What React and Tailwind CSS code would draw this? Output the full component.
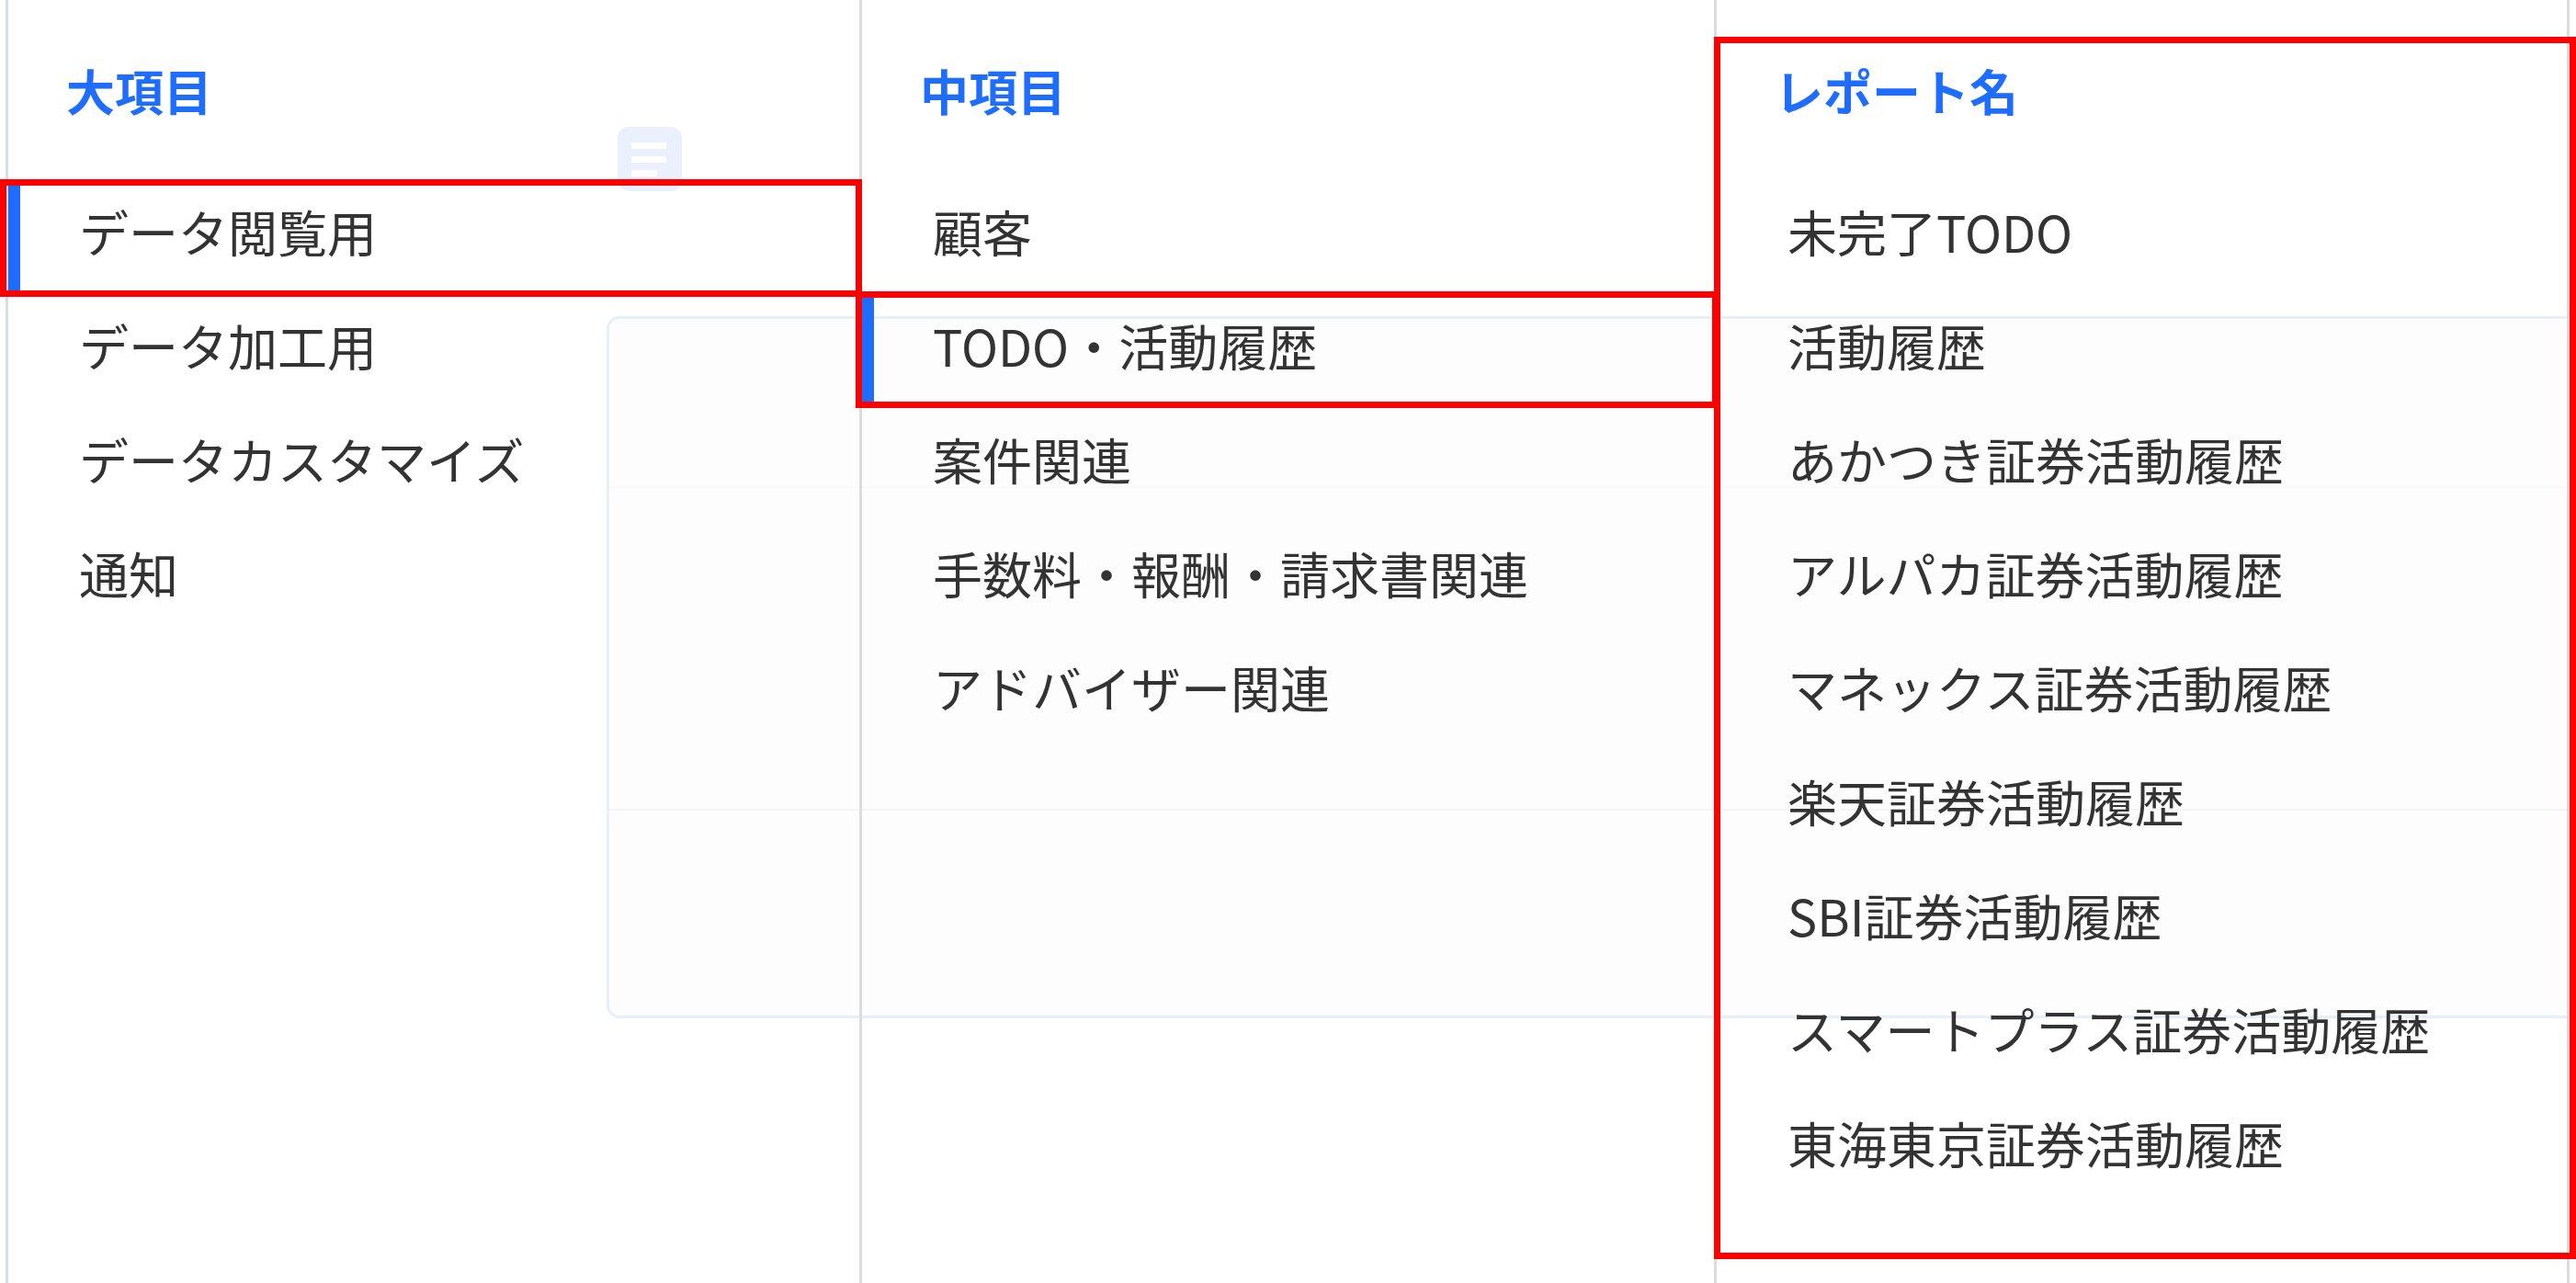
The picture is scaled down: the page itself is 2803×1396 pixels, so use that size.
import React from 'react';

const majors = ['データ閲覧用', 'データ加工用', 'データカスタマイズ', '通知'];
const middles = ['顧客', 'TODO・活動履歴', '案件関連', '手数料・報酬・請求書関連', 'アドバイザー関連'];
const reports = [
  '未完了TODO',
  '活動履歴',
  'あかつき証券活動履歴',
  'アルパカ証券活動履歴',
  'マネックス証券活動履歴',
  '楽天証券活動履歴',
  'SBI証券活動履歴',
  'スマートプラス証券活動履歴',
  '東海東京証券活動履歴',
];

const Column = ({ title, items, selected, className }) => (
  <div className={`flex flex-col h-full border-l-[3px] ${className}`}>
    <div className="h-[196px] flex items-center pl-[63px]">
      <span className="text-[53px] leading-none font-bold text-[#1f6dff]">{title}</span>
    </div>
    {items.map((item, i) => (
      <div
        key={item}
        className={`h-[124px] flex items-center pl-[64px] pb-[12px] border-l-[13px] ${
          i === selected ? 'border-[#1f6dff]' : 'border-transparent'
        }`}
      >
        <span className="text-[54px] leading-none text-[#333333] whitespace-nowrap">{item}</span>
      </div>
    ))}
  </div>
);

export default function App() {
  return (
    <div
      className="relative w-full h-[1396px] bg-white overflow-hidden"
      style={{ fontFamily: '"Noto Sans CJK JP", "Noto Sans", sans-serif' }}
    >
      {/* page behind the menu */}
      <div className="pt-[138px]">
        <div className="ml-[672px] w-[70px] h-[70px] rounded-[12px] bg-[#eaf1fd] flex flex-col justify-center gap-[8px] pl-[15px]">
          <div className="w-[38px] h-[7px] bg-white rounded-[1px]" />
          <div className="w-[38px] h-[7px] bg-white rounded-[1px]" />
          <div className="w-[28px] h-[7px] bg-white rounded-[1px]" />
        </div>
        <div className="mt-[136px] ml-[660px] h-[764px] rounded-l-[14px] border-l-[3px] border-y-[3px] border-[#e8effc] bg-[#fdfdfe] flex flex-col">
          <div className="h-[184px] border-b-2 border-[#fafbfc]" />
          <div className="h-[351px] border-b-2 border-[#f3f4f6]" />
        </div>
      </div>

      {/* menu */}
      <div className="absolute inset-0 flex pl-[6px]">
        <Column title="大項目" items={majors} selected={0} className="w-[929px] border-[#d7dee8]" />
        <Column title="中項目" items={middles} selected={1} className="w-[930px] border-[#dcdcdc]" />
        <div className="w-[931px] border-r-[3px] border-[#dcdcdc] h-full">
          <Column title="レポート名" items={reports} selected={-1} className="border-[#dcdcdc]" />
        </div>
      </div>

      {/* annotation boxes */}
      <div className="absolute left-0 top-[195px] w-[938px] h-[128px] border-[7px] border-[#ff0000]" />
      <div className="absolute left-[931px] top-[317px] w-[939px] h-[127px] border-[7px] border-[#ff0000]" />
      <div className="absolute left-[1865px] top-[40px] w-[938px] h-[1330px] border-[7px] border-[#ff0000]" />
    </div>
  );
}
